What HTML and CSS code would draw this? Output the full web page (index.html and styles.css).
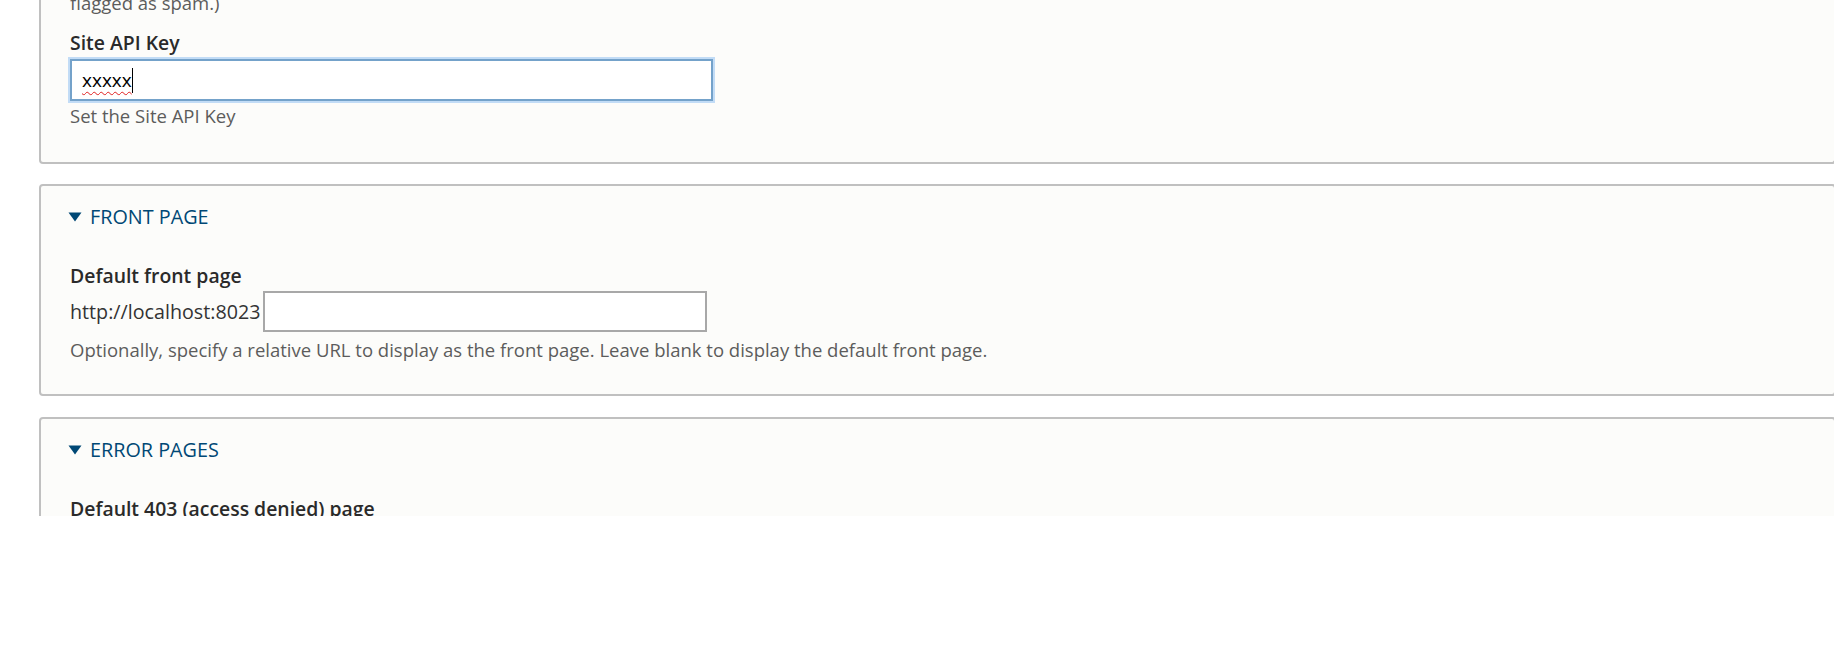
FILE: index.html
```html
<!DOCTYPE html>
<html lang="en">
<head>
<meta charset="utf-8">
<title>Site settings</title>
<link rel="stylesheet" href="styles.css">
</head>
<body>
<div class="viewport">
  <div class="page">
    <div class="fieldset fieldset-top">
      <div class="description">flagged as spam.)</div>
      <div class="form-item">
        <label class="label">Site API Key</label>
        <div class="text-input is-focused"><span class="typed">xxxxx</span><span class="caret"></span></div>
        <div class="description">Set the Site API Key</div>
      </div>
    </div>

    <div class="fieldset">
      <div class="summary">
        <svg class="arrow" width="14" height="10" viewBox="0 0 14 10"><path d="M0.5 0.5 H13.5 L7 9.5 Z" fill="#004875"/></svg>
        <span>FRONT PAGE</span>
      </div>
      <div class="form-item form-item-gap">
        <label class="label">Default front page</label>
        <div class="prefix-row">
          <span class="prefix">http://localhost:8023</span>
          <div class="text-input text-input-plain"></div>
        </div>
        <div class="description">Optionally, specify a relative URL to display as the front page. Leave blank to display the default front page.</div>
      </div>
    </div>

    <div class="fieldset">
      <div class="summary">
        <svg class="arrow" width="14" height="10" viewBox="0 0 14 10"><path d="M0.5 0.5 H13.5 L7 9.5 Z" fill="#004875"/></svg>
        <span>ERROR PAGES</span>
      </div>
      <div class="form-item form-item-gap">
        <label class="label">Default 403 (access denied) page</label>
      </div>
    </div>
  </div>
</div>
</body>
</html>
```

FILE: styles.css
```css
html, body {
  margin: 0;
  padding: 0;
  background: #ffffff;
  overflow: hidden;
}

body {
  font-family: "Open Sans", "Noto Sans", sans-serif;
  font-size: 19.7px;
  line-height: 27px;
  color: #333333;
}

.viewport {
  height: 516px;
  overflow: hidden;
}

.page {
  margin-top: -11px;
  padding-left: 39px;
}

.fieldset {
  width: 1797px;
  box-sizing: border-box;
  background: #fcfcfa;
  border: 2px solid #c0c0c0;
  border-radius: 4px;
  padding: 17px 0 31px 29px;
  margin-bottom: 21px;
}

.fieldset-top {
  border-top: none;
  border-top-left-radius: 0;
  border-top-right-radius: 0;
  padding-top: 0;
  padding-bottom: 33px;
  margin-bottom: 20px;
}

.summary {
  display: flex;
  align-items: center;
  font-size: 19.8px;
  line-height: 27px;
  color: #004875;
}

.arrow {
  display: block;
  margin-left: -2px;
  margin-right: 8px;
}

.form-item {
  display: flex;
  flex-direction: column;
  align-items: flex-start;
}

.fieldset-top .form-item {
  margin-top: 13px;
}

.form-item-gap {
  margin-top: 32px;
}

.label {
  display: block;
  font-size: 19.4px;
  font-weight: 600;
  color: #2a2a2a;
}

.description {
  font-size: 18.5px;
  color: #5c5c5c;
}

.text-input {
  box-sizing: border-box;
  background: #ffffff;
}

.is-focused {
  width: 643px;
  height: 42px;
  margin-top: 3px;
  margin-bottom: 1px;
  border: 2px solid #74a2ca;
  box-shadow: 0 0 0 2px #c2dcf6;
  display: flex;
  align-items: center;
  padding-left: 10px;
  font-size: 19px;
  color: #000000;
}

.typed {
  text-decoration: underline wavy #e02020;
  text-decoration-thickness: 1px;
  text-underline-offset: 4px;
  text-decoration-skip-ink: none;
}

.caret {
  display: block;
  width: 1px;
  height: 25px;
  background: #000000;
}

.prefix-row {
  display: flex;
  align-items: center;
  gap: 3px;
  margin-top: 2px;
  margin-bottom: 4px;
}

.prefix {
  color: #333333;
}

.text-input-plain {
  width: 444px;
  height: 41px;
  border: 2px solid #a8a8a8;
}
```
